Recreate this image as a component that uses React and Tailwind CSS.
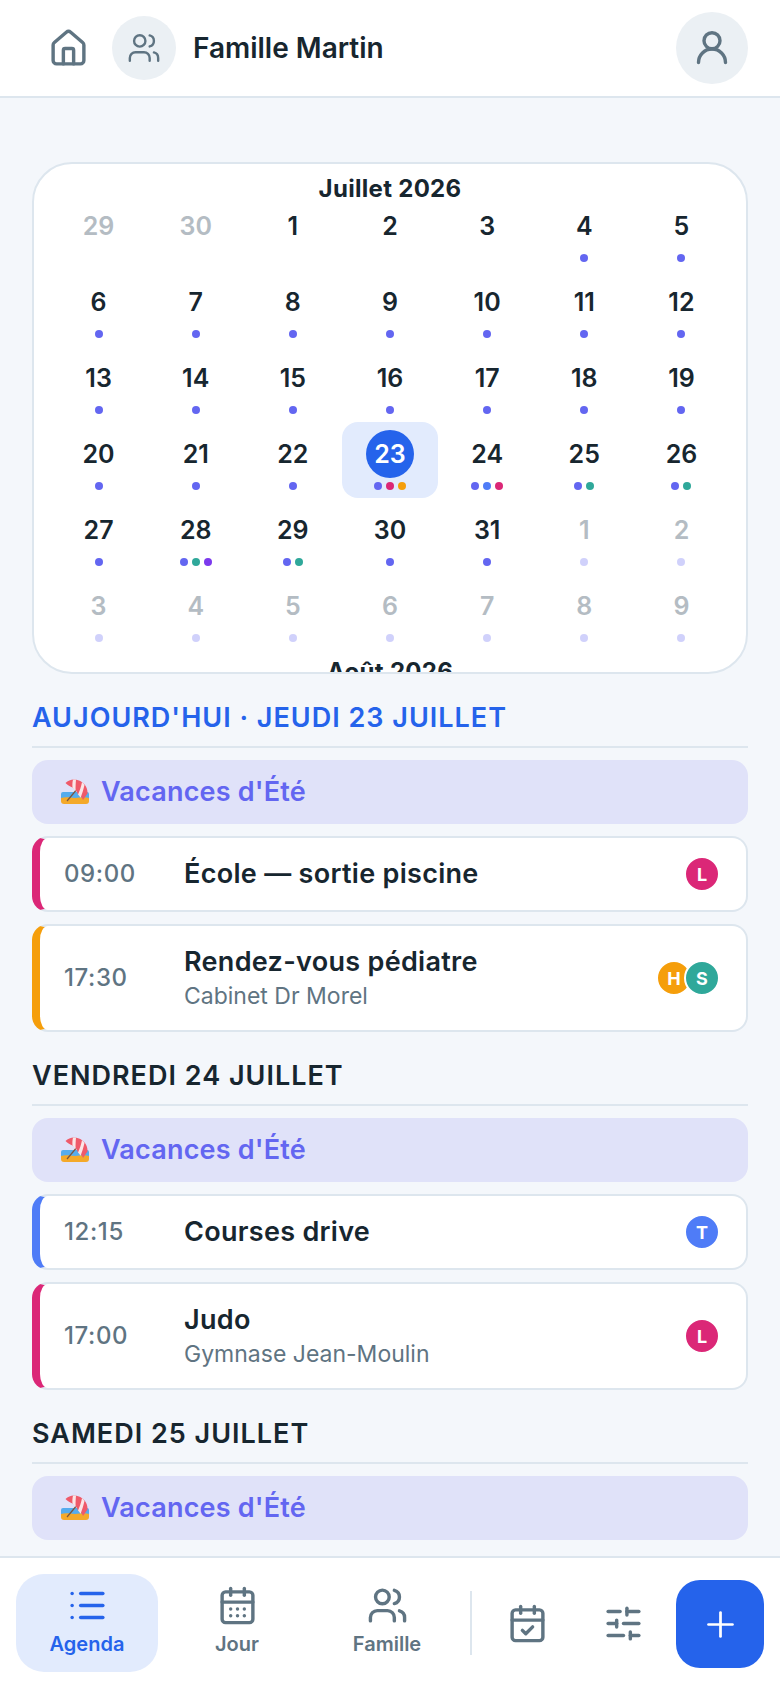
import { House, Users, List, CalendarDays, CalendarCheck, SlidersHorizontal, Plus } from 'lucide-react'

const I = 'bg-[#6366f1]'
const P = 'bg-[#db2777]'
const A = 'bg-[#f59e0b]'
const B = 'bg-[#4f7cf7]'
const T = 'bg-[#2fa89a]'
const V = 'bg-[#7c3aed]'

const weeks = [
  [['29', [], 1], ['30', [], 1], ['1', []], ['2', []], ['3', []], ['4', [I]], ['5', [I]]],
  [['6', [I]], ['7', [I]], ['8', [I]], ['9', [I]], ['10', [I]], ['11', [I]], ['12', [I]]],
  [['13', [I]], ['14', [I]], ['15', [I]], ['16', [I]], ['17', [I]], ['18', [I]], ['19', [I]]],
  [['20', [I]], ['21', [I]], ['22', [I]], ['23', [I, P, A]], ['24', [I, B, P]], ['25', [I, T]], ['26', [I, T]]],
  [['27', [I]], ['28', [I, T, V]], ['29', [I, T]], ['30', [I]], ['31', [I]], ['1', [I], 1], ['2', [I], 1]],
  [['3', [I], 1], ['4', [I], 1], ['5', [I], 1], ['6', [I], 1], ['7', [I], 1], ['8', [I], 1], ['9', [I], 1]],
]

const BeachIcon = () => (
  <svg width="28" height="26" viewBox="0 0 28 26">
    <path d="M0 17h28v5a3 3 0 0 1-3 3H3a3 3 0 0 1-3-3z" fill="#f4a92a" />
    <path d="M0 19v-4a2 2 0 0 1 2-2h24a2 2 0 0 1 2 2v4c-5-1.5-9 0-14 0s-9-1.500-14 0z" fill="#55acee" />
    <path d="M6 22L17 9" stroke="#7a5540" strokeWidth="1.2" />
    <path d="M4.500 4C8 0.500 13 -0.500 18 1.500c5 2 9 7 8.500 13L22 21c-1-3-3-5-5-5.500-1-3-3-6-5.500-7-2-1-5-2.500-7-4.500z" fill="#ef5a6a" />
    <path d="M12 0.700C13 .5 14 .6 15 .8c-.3 3-.5 7-.4 11.200-.9-1.400-2-2.700-3.100-3.500C11.200 6 11.400 3 12 .7z" fill="#fbe6e6" />
    <path d="M21 3.200c1 .9 1.800 1.800 2.500 2.900-1 4.500-2.500 9-3.900 12.600-.8-1.300-1.700-2.300-2.600-3.200 1.800-4 3.200-8.300 4-12.300z" fill="#fbe6e6" />
  </svg>
)

const UserIcon = () => (
  <svg width="36" height="36" viewBox="0 0 36 36" fill="none" stroke="currentColor" strokeWidth="3.4" strokeLinecap="round">
    <circle cx="18" cy="10.700" r="8" />
    <path d="M4.500 32.500a13.500 13.500 0 0 1 27 0" />
  </svg>
)

const Banner = () => (
  <div className="h-16 rounded-2xl bg-[#e0e2f9] flex items-center pl-[29px] gap-[12px] mb-3">
    <BeachIcon />
    <span className="text-[27px] font-semibold tracking-[0.2px] text-[#6366f1]">Vacances d'Été</span>
  </div>
)

const Avatar = ({ letter, color, ring }) => (
  <div className={`w-9 h-9 rounded-full ${color} border-2 border-white flex items-center justify-center text-white text-[18px] font-bold ${ring ? '-ml-2' : ''}`}>
    {letter}
  </div>
)

const EventCard = ({ time, title, place, color, people }) => (
  <div className={`flex items-center rounded-2xl bg-white border-2 border-[#dde6ee] border-l-8 ${color} mb-3 pl-6 pr-[26px] ${place ? 'h-[108px]' : 'h-[76px]'}`}>
    <div className="w-[120px] text-[24px] font-medium tracking-[0.6px] text-[#5f7482]">{time}</div>
    <div className="flex-1">
      <div className="text-[27px] font-semibold tracking-[0.3px] text-[#17262f] leading-9">{title}</div>
      {place && <div className="text-[23px] text-[#5f7482] leading-8">{place}</div>}
    </div>
    <div className="flex">
      {people.map((p, i) => (
        <Avatar key={i} letter={p[0]} color={p[1]} ring={i > 0} />
      ))}
    </div>
  </div>
)

const DayHeader = ({ children, today }) => (
  <div className={`h-[62px] mb-3 border-b-2 border-[#dde6ee] pt-[14px] leading-[36px] text-[27px] font-semibold tracking-[1px] ${today ? 'text-[#2563eb]' : 'text-[#17262f]'}`}>
    {children}
  </div>
)

const NavItem = ({ icon: Icon, label, active }) => (
  <div className={`w-[142px] h-[98px] rounded-[28px] flex flex-col items-center pt-[11px] gap-[4px] ${active ? 'bg-[#e2ebfd] text-[#2563eb]' : 'text-[#5f7482]'}`}>
    <Icon size={41} strokeWidth={2} />
    <span className="text-[20px] leading-7 font-semibold">{label}</span>
  </div>
)

export default function App() {
  return (
    <div className="w-[780px] h-[1688px] flex flex-col bg-[#f4f7fb] overflow-hidden font-['Inter',sans-serif]">
      <header className="h-[98px] shrink-0 bg-white border-b-2 border-[#dde6ee] flex items-center pl-[48px] pr-[32px]">
        <House size={41} strokeWidth={2} className="text-[#5f7482]" />
        <div className="ml-[23px] w-16 h-16 rounded-full bg-[#ebf0f4] flex items-center justify-center">
          <Users size={34} strokeWidth={1.7} className="text-[#5f7482]" />
        </div>
        <div className="ml-[17px] text-[28px] font-semibold text-[#17262f]">Famille Martin</div>
        <div className="ml-auto w-[72px] h-[72px] rounded-full bg-[#ebf0f4] flex items-center justify-center text-[#5f7482]">
          <UserIcon />
        </div>
      </header>

      <main className="flex-1 overflow-hidden pl-8 pr-8 pt-[64px]">
        <section className="h-[512px] rounded-[40px] bg-white border-2 border-[#dde6ee] overflow-hidden">
          <div className="h-[30px] text-center text-[24px] tracking-[0.3px] font-bold text-[#17262f] leading-[50px]">Juillet 2026</div>
          <div className="mx-4 grid grid-cols-7">
            {weeks.flat().map(([day, dots, muted], i) => {
              const today = day === '23'
              return (
                <div key={i} className="h-[76px] flex justify-center">
                  <div className={`w-[96px] h-[76px] rounded-2xl flex flex-col items-center pt-2 ${today ? 'bg-[#e2ebfd]' : ''}`}>
                    <div className={`w-12 h-12 pt-[2px] rounded-full flex items-center justify-center text-[25px] font-semibold ${today ? 'bg-[#2563eb] text-white' : muted ? 'text-[#b4bcc3]' : 'text-[#17262f]'}`}>
                      {day}
                    </div>
                    <div className={`flex gap-1 mt-1 ${muted ? 'opacity-30' : ''}`}>
                      {dots.map((d, j) => (
                        <span key={j} className={`w-2 h-2 rounded-full ${d}`} />
                      ))}
                    </div>
                  </div>
                </div>
              )
            })}
          </div>
          <div className="h-[30px] text-center text-[24px] tracking-[0.3px] font-bold text-[#17262f] leading-[44px]">Août 2026</div>
        </section>

        <div className="mt-3">
          <DayHeader today>AUJOURD'HUI · JEUDI 23 JUILLET</DayHeader>
          <Banner />
          <EventCard time="09:00" title="École — sortie piscine" color="border-l-[#db2777]" people={[['L', 'bg-[#db2777]']]} />
          <EventCard time="17:30" title="Rendez-vous pédiatre" place="Cabinet Dr Morel" color="border-l-[#f59e0b]" people={[['H', 'bg-[#f59e0b]'], ['S', 'bg-[#2fa89a]']]} />
          <DayHeader>VENDREDI 24 JUILLET</DayHeader>
          <Banner />
          <EventCard time="12:15" title="Courses drive" color="border-l-[#4f7cf7]" people={[['T', 'bg-[#4f7cf7]']]} />
          <EventCard time="17:00" title="Judo" place="Gymnase Jean-Moulin" color="border-l-[#db2777]" people={[['L', 'bg-[#db2777]']]} />
          <DayHeader>SAMEDI 25 JUILLET</DayHeader>
          <Banner />
        </div>
      </main>

      <nav className="h-[132px] shrink-0 bg-white border-t-2 border-[#dde6ee] flex items-center pl-4 pr-4">
        <NavItem icon={List} label="Agenda" active />
        <div className="ml-[8px]"><NavItem icon={CalendarDays} label="Jour" /></div>
        <div className="ml-[8px]"><NavItem icon={Users} label="Famille" /></div>
        <div className="ml-[12px] w-[2px] h-16 bg-[#dde6ee]" />
        <CalendarCheck size={41} strokeWidth={2} className="ml-[35px] text-[#5f7482]" />
        <SlidersHorizontal size={41} strokeWidth={2} className="ml-[55px] text-[#5f7482]" />
        <div className="ml-auto mt-[2px] w-[88px] h-[88px] rounded-3xl bg-[#2563eb] flex items-center justify-center text-white">
          <Plus size={41} strokeWidth={1.6} />
        </div>
      </nav>
    </div>
  )
}
